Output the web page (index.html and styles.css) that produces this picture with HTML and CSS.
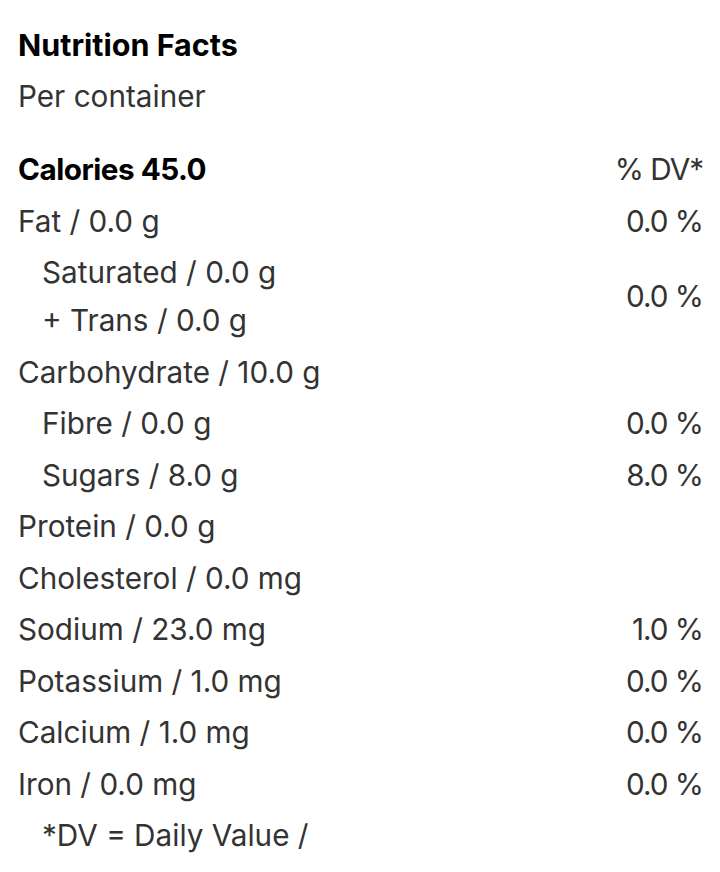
FILE: index.html
```html
<!DOCTYPE html>
<html lang="en">
<head>
<meta charset="utf-8">
<title>Nutrition Facts</title>
<link rel="stylesheet" href="styles.css">
</head>
<body>
<section class="facts">
  <h2 class="title">Nutrition Facts</h2>
  <p class="serving">Per container</p>
  <div class="table">
    <div class="row head">
      <span class="name">Calories 45.0</span>
      <span class="dv">% DV*</span>
    </div>
    <div class="row">
      <span class="name">Fat / 0.0 g</span>
      <span class="dv">0.0 %</span>
    </div>
    <div class="row">
      <div class="group">
        <span class="name sub">Saturated / 0.0 g</span>
        <span class="name sub">+ Trans / 0.0 g</span>
      </div>
      <span class="dv">0.0 %</span>
    </div>
    <div class="row">
      <span class="name">Carbohydrate / 10.0 g</span>
    </div>
    <div class="row">
      <span class="name sub">Fibre / 0.0 g</span>
      <span class="dv">0.0 %</span>
    </div>
    <div class="row">
      <span class="name sub">Sugars / 8.0 g</span>
      <span class="dv">8.0 %</span>
    </div>
    <div class="row">
      <span class="name">Protein / 0.0 g</span>
    </div>
    <div class="row">
      <span class="name">Cholesterol / 0.0 mg</span>
    </div>
    <div class="row">
      <span class="name">Sodium / 23.0 mg</span>
      <span class="dv">1.0 %</span>
    </div>
    <div class="row">
      <span class="name">Potassium / 1.0 mg</span>
      <span class="dv">0.0 %</span>
    </div>
    <div class="row">
      <span class="name">Calcium / 1.0 mg</span>
      <span class="dv">0.0 %</span>
    </div>
    <div class="row">
      <span class="name">Iron / 0.0 mg</span>
      <span class="dv">0.0 %</span>
    </div>
    <div class="row">
      <span class="name sub">*DV = Daily Value /</span>
    </div>
  </div>
</section>
</body>
</html>
```
FILE: styles.css
```css
html, body {
  margin: 0;
  padding: 0;
  background: #ffffff;
}
body {
  font-family: Inter, "Noto Sans", sans-serif;
  color: #333333;
  font-size: 29.7px;
}
.facts {
  padding: 20px 17px 0 18px;
}
.title {
  margin: 0;
  font-size: 30.5px;
  font-weight: 700;
  color: #000000;
  line-height: 50px;
}
.serving {
  margin: 0 0 23px 0;
  line-height: 52px;
}
.table {
  display: flex;
  flex-direction: column;
  gap: 3.5px;
}
.row {
  display: flex;
  justify-content: space-between;
  align-items: center;
  line-height: 48px;
}
.group {
  display: flex;
  flex-direction: column;
}
.row.head .name {
  font-weight: 700;
  color: #000000;
  letter-spacing: -0.5px;
}
.sub {
  padding-left: 24px;
}
.dv {
  text-align: right;
  letter-spacing: -1px;
}
```
